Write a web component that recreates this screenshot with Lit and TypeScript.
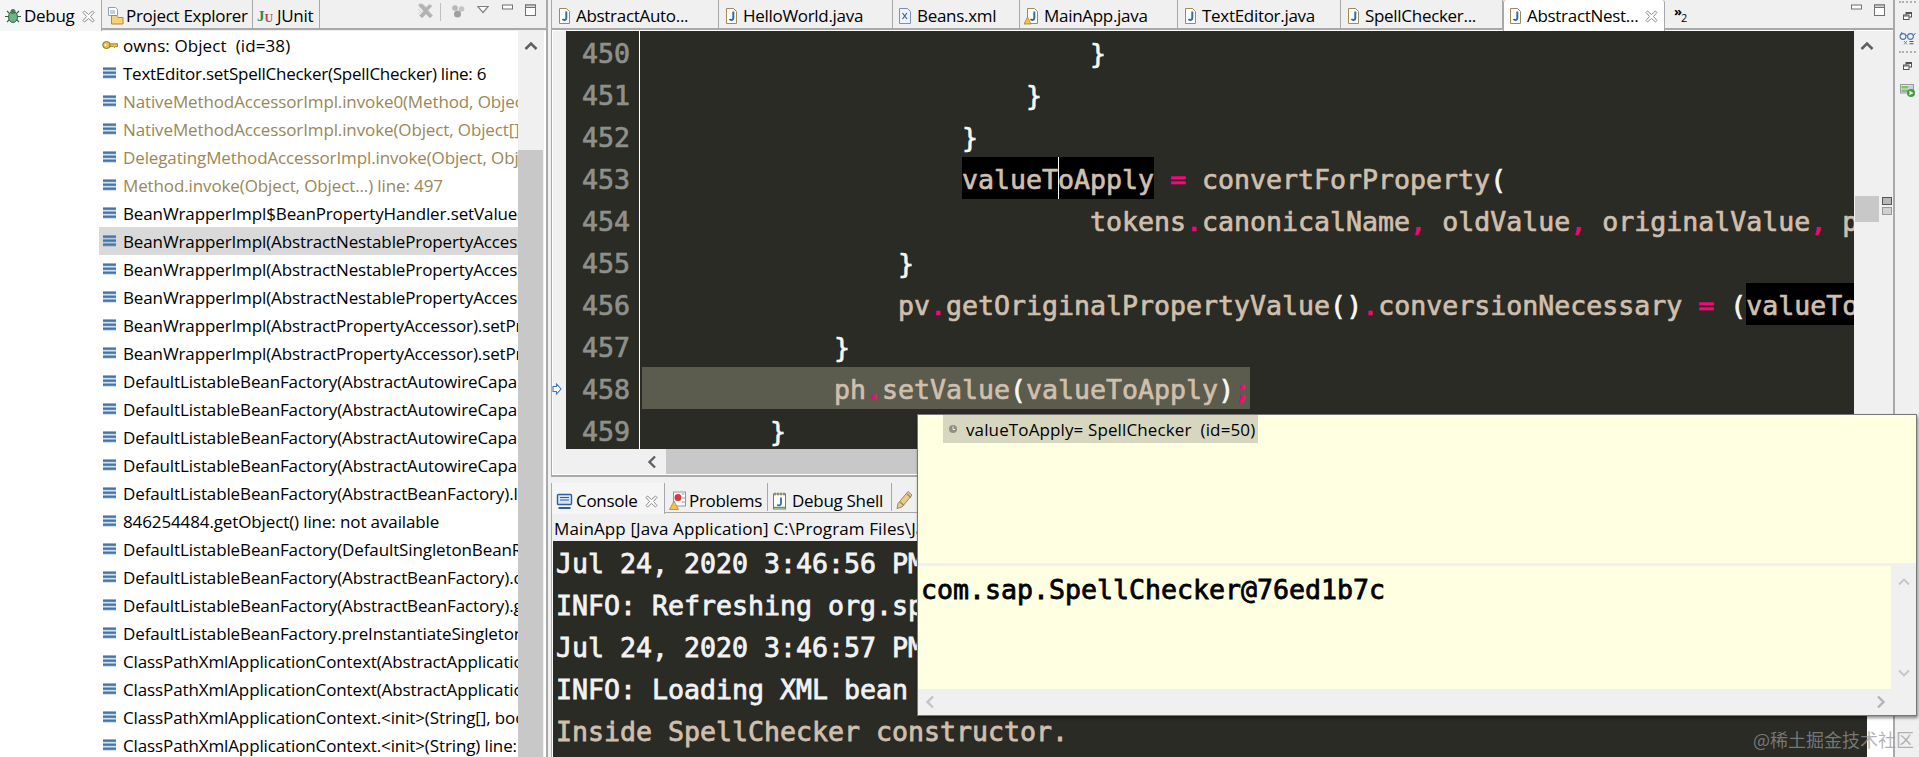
import { LitElement, html, css, svg } from "lit";
import { customElement } from "lit/decorators.js";

const frames: [string, string?][] = [
  ["owns: Object  (id=38)", "key"],
  ["TextEditor.setSpellChecker(SpellChecker) line: 6", "tight"],
  ["NativeMethodAccessorImpl.invoke0(Method, Object, Object[]) line: not available [native method]", "lib"],
  ["NativeMethodAccessorImpl.invoke(Object, Object[]) line: 62", "lib"],
  ["DelegatingMethodAccessorImpl.invoke(Object, Object[]) line: 43", "lib"],
  ["Method.invoke(Object, Object...) line: 497", "lib"],
  ["BeanWrapperImpl$BeanPropertyHandler.setValue(Object, Object) line: 358"],
  ["BeanWrapperImpl(AbstractNestablePropertyAccessor).processLocalProperty(", "sel"],
  ["BeanWrapperImpl(AbstractNestablePropertyAccessor).setPropertyValue("],
  ["BeanWrapperImpl(AbstractNestablePropertyAccessor).setPropertyValue("],
  ["BeanWrapperImpl(AbstractPropertyAccessor).setPropertyValues("],
  ["BeanWrapperImpl(AbstractPropertyAccessor).setPropertyValues("],
  ["DefaultListableBeanFactory(AbstractAutowireCapableBeanFactory).applyPropertyValues("],
  ["DefaultListableBeanFactory(AbstractAutowireCapableBeanFactory).populateBean("],
  ["DefaultListableBeanFactory(AbstractAutowireCapableBeanFactory).doCreateBean("],
  ["DefaultListableBeanFactory(AbstractAutowireCapableBeanFactory).createBean("],
  ["DefaultListableBeanFactory(AbstractBeanFactory).lambda$doGetBean$0("],
  ["846254484.getObject() line: not available"],
  ["DefaultListableBeanFactory(DefaultSingletonBeanRegistry).getSingleton("],
  ["DefaultListableBeanFactory(AbstractBeanFactory).doGetBean("],
  ["DefaultListableBeanFactory(AbstractBeanFactory).getBean("],
  ["DefaultListableBeanFactory.preInstantiateSingletons() line: 760"],
  ["ClassPathXmlApplicationContext(AbstractApplicationContext).finishBeanFactoryInitialization("],
  ["ClassPathXmlApplicationContext(AbstractApplicationContext).refresh() line: 522"],
  ["ClassPathXmlApplicationContext.<init>(String[], boolean, ApplicationContext) line: 144"],
  ["ClassPathXmlApplicationContext.<init>(String) line: 85"],
];

const code: [number, number, string, string?][] = [
  [450, 28, "}"],
  [451, 24, "}"],
  [452, 20, "}"],
  [453, 20, "valueToApply = convertForProperty(", "caret"],
  [454, 28, "tokens.canonicalName, oldValue, originalValue, pd.getTypeDescriptor()"],
  [455, 16, "}"],
  [456, 16, "pv.getOriginalPropertyValue().conversionNecessary = (valueToApply != originalValue);", "occ"],
  [457, 12, "}"],
  [458, 12, "ph.setValue(valueToApply);", "hl"],
  [459, 8, "}"],
];

function tok(src: string) {
  return src.split(/([.,=;!]|[(){}])/).map((p) => {
    if (!p) return "";
    if (/^[.,=;!]$/.test(p)) return html`<span class="op">${p}</span>`;
    if (/^[(){}]$/.test(p)) return html`<span class="br">${p}</span>`;
    return p;
  });
}

function line(text: string, mode?: string) {
  if (mode === "hl") return html`<span class="hlline">${" ".repeat(12)}${tok(text)}</span>`;
  if (mode === "caret") {
    const rest = text.slice(12);
    return html`<span class="occur">valueT<span class="caret"></span>oApply</span>${tok(rest)}`;
  }
  if (mode === "occ") {
    const i = text.indexOf("valueToApply");
    return html`${tok(text.slice(0, i))}<span class="occur">valueToApply</span>${tok(text.slice(i + 12))}`;
  }
  return tok(text);
}

const ic = (w: number, h: number, body: unknown) =>
  html`<svg class="ic" width=${w} height=${h} viewBox="0 0 ${w} ${h}">${body}</svg>`;

const javaPage = (warn = false) =>
  ic(16, 18, svg`
    <path d="M3.500 1.500h7l3 3v12h-10z" fill="#fff" stroke="#a08a55"/>
    <path d="M10.300 4.500v6.500c0 2.300-2.700 2.600-3.800 1" fill="none" stroke="#2f6cab" stroke-width="2"/>
    ${warn ? svg`<path d="M3.500 10l3.600 7H0z" fill="#f2c14e" stroke="#a87a1e" stroke-width=".7"/>` : ""}`);

const xmlPage = () =>
  ic(16, 18, svg`
    <path d="M2.500 1.500h8l3 3v12h-11z" fill="#eef3fa" stroke="#7c90b4"/>
    <path d="M5.500 6l4.500 6M10 6l-4.500 6" stroke="#44628f" stroke-width="1.200"/>`);

const closeX = () =>
  ic(13, 13, svg`<path d="M2.500 1L6.500 4.500 10.500 1 12 2.500 8.500 6.500 12 10.500 10.500 12 6.500 8.500 2.500 12 1 10.500 4.500 6.500 1 2.500z" fill="#fff" stroke="#8c8c8c"/>`);

const bug = () =>
  ic(18, 18, svg`
    <path d="M3 4l3 3M15 4l-3 3M1 9.500h4M13 9.500h4M3 15l3-3M15 15l-3-3" stroke="#3c5a44" stroke-width="1.100"/>
    <ellipse cx="9" cy="10" rx="4.500" ry="5.500" fill="#6fb286" stroke="#2f6d4c"/>
    <circle cx="9" cy="4.500" r="2.500" fill="#3f7d5b"/>`);

const folder = () =>
  ic(18, 20, svg`
    <path d="M2.500 1.500h7l2 2v6h-9z" fill="#fff" stroke="#8aa0b8"/>
    <path d="M4 5h5M4 7h5" stroke="#8aa0b8"/>
    <path d="M5.500 9.500h5l1.500 2h5v6.500h-11.500z" fill="#f4d27a" stroke="#b5893a"/>`);

const stack = () =>
  ic(13, 12, svg`
    <defs><linearGradient id="sb" x1="0" y1="0" x2="0" y2="1"><stop offset="0" stop-color="#2a5f9c"/><stop offset="1" stop-color="#6d9cc8"/></linearGradient></defs>
    <rect x="0" y="0.500" width="13" height="2.800" fill="url(#sb)"/>
    <rect x="0" y="4.500" width="13" height="2.800" fill="url(#sb)"/>
    <rect x="0" y="8.500" width="13" height="2.800" fill="url(#sb)"/>`);

const key = () =>
  ic(16, 10, svg`
    <ellipse cx="4.500" cy="5" rx="3.800" ry="3.500" fill="#e9c04a" stroke="#8f7320"/>
    <path d="M8 3.800h7.500v2.800H13.500l-1 1-1-1H8z" fill="#e9c04a" stroke="#8f7320" stroke-width=".8"/>
    <circle cx="3.500" cy="5" r="1.100" fill="#fff"/>`);

const removeAll = () =>
  ic(17, 16, svg`
    <path d="M2 1l3.500 0 3.500 3.500L12.500 1.500 15 3 11 7.500 15.500 12.500 13 15 9 11 5 15 2.500 12.500 6.500 8 2 3z" fill="#b2b2b2" stroke="#c6c6c6"/>
    <path d="M1 6l3 3M1 11l3-3" stroke="#d0d0d0"/>`);

const balls = () =>
  ic(14, 15, svg`
    <circle cx="4" cy="5" r="2.800" fill="#b8b8b8"/><circle cx="10.500" cy="6" r="2.800" fill="#c4c4c4"/>
    <circle cx="6.500" cy="11" r="3.500" fill="#a0a0a0"/>`);

const tri = () => ic(12, 12, svg`<path d="M.8 3.500h10.400L6 9.500z" fill="#fff" stroke="#808080" stroke-width="1.200"/>`);
const minimize = () => ic(11, 7, svg`<rect x=".5" y="2" width="10" height="4" fill="#fff" stroke="#707070"/>`);
const maximize = () => ic(11, 13, svg`<rect x=".5" y="2" width="10" height="10.500" fill="#fff" stroke="#707070"/><rect x=".5" y="2" width="10" height="2.500" fill="#d8d8d8" stroke="#707070"/>`);
const chevUp = (c = "#606060") => ic(14, 10, svg`<path d="M1.500 8L7 2.500 12.500 8" fill="none" stroke=${c} stroke-width="2.600"/>`);
const chevLeft = (c = "#606060") => ic(10, 14, svg`<path d="M8 1.500L2.500 7 8 12.500" fill="none" stroke=${c} stroke-width="2.400"/>`);
const chevRight = (c = "#b4b4b4") => ic(10, 14, svg`<path d="M2 1.500L7.500 7 2 12.500" fill="none" stroke=${c} stroke-width="2.400"/>`);
const chevDown = (c = "#c4c4c4") => ic(12, 8, svg`<path d="M1 1.500L6 6.500 11 1.500" fill="none" stroke=${c} stroke-width="1.800"/>`);
const restore = () =>
  ic(9, 8, svg`<rect x="3" y=".5" width="5.500" height="4.500" fill="#fff" stroke="#555"/><rect x=".5" y="3" width="5.500" height="4.500" fill="#fff" stroke="#555"/><path d="M.5 4h5M3 1.500h5" stroke="#555"/>`);
const glasses = () =>
  ic(17, 14, svg`<circle cx="4" cy="5.500" r="2.900" fill="none" stroke="#4a76a8" stroke-width="1.100"/><circle cx="11.500" cy="5.500" r="2.900" fill="none" stroke="#4a76a8" stroke-width="1.100"/><path d="M6.800 5q1-1 2 0M1.200 5L3 1M14.200 5L16.500 2" fill="none" stroke="#4a76a8"/><path d="M10.500 10.500h4M10.500 12.800h4" stroke="#2f5c96" stroke-width="1.100"/><path d="M5 10l3 3.500M8 10l-3 3.500" stroke="#4a76a8" stroke-width=".8"/>`);
const runView = () =>
  ic(15, 13, svg`<rect x=".5" y=".5" width="13" height="8.500" fill="#e6e6e6" stroke="#999"/><rect x="1.500" y="2" width="7" height="2.500" fill="#7fbf6e"/><rect x="1.500" y="5.500" width="7" height="2.500" fill="#7fbf6e"/><rect x="9" y="1.500" width="4" height="4" fill="#bcd4ea"/><circle cx="11" cy="9" r="4" fill="#3f9e3c"/><path d="M9.500 6.700l4 2.300-4 2.300z" fill="#fff"/>`);
const console_ = () =>
  ic(17, 17, svg`<rect x="1.500" y="1.500" width="14" height="10" rx="1" fill="#d7e6f6" stroke="#2f5f9a" stroke-width="1.400"/><path d="M4 4.500h9M4 7h9" stroke="#2f5f9a"/><path d="M2.500 15h12" stroke="#2f5f9a" stroke-width="2"/>`);
const problems = () =>
  ic(18, 20, svg`<rect x="4.500" y="1" width="12" height="14" fill="#fff" stroke="#8b97a8"/><circle cx="9" cy="6.500" r="3.500" fill="#d83a3a"/><path d="M12.500 3h3M13 7h3M13 11h3" stroke="#8b97a8"/><path d="M5 10l4.500 8.500H.5z" fill="#f2c14e" stroke="#a87a1e" stroke-width=".7"/>`);
const shell = () =>
  ic(15, 18, svg`<rect x="1.500" y="2" width="12" height="15" fill="#fff" stroke="#7a7a5a"/><path d="M3 .5v3M6 .5v3M9 .5v3M12 .5v3" stroke="#66665a"/><path d="M9 5.500v6c0 2.200-2.600 2.500-3.700 1" fill="none" stroke="#2f6cab" stroke-width="1.800"/><path d="M2 15.500h11" stroke="#52a447" stroke-width="1.500"/>`);
const pencil = () =>
  ic(17, 19, svg`<path d="M12 1.500l4 3.500L6 17l-5 1.500 1-5z" fill="#e9cc88" stroke="#a68a4a"/><path d="M4 12l4 3.500M11 4l4 3.500" stroke="#8c8c80" stroke-width="1.400"/>`);
const marker = () =>
  ic(10, 12, svg`<path d="M1 3.500h3.500V1L9 6l-4.500 5V8.500H1z" fill="#fff" stroke="#3d78b8" stroke-width="1.100"/>`);
const field = () =>
  ic(10, 12, svg`<circle cx="5" cy="6" r="4" fill="#8f8f86"/><path d="M5 3.500v3h2" stroke="#eee" fill="none"/>`);

@customElement("app-root")
export class AppRoot extends LitElement {
  static styles = css`
    :host { display: block; width: 1919px; height: 757px; }
    * { box-sizing: border-box; }
    .root {
      position: relative; display: flex; width: 1919px; height: 757px; overflow: hidden;
      background: #f0f0f0; color: #000;
      font: 17px/28px "Open Sans", "Noto Sans", sans-serif; letter-spacing: -0.12px;
    }
    .ic { display: block; flex: none; }

    /* left debug view */
    .debug { flex: none; width: 548px; display: flex; flex-direction: column; border-right: 2px solid #a9a9a9; }
    .tabs { height: 31px; flex: none; border-bottom: 3px solid #f0f0f0; display: grid; align-items: stretch; position: relative; }
    .tabs::after { content: ""; position: absolute; left: 0; right: 0; top: 28px; height: 1.500px; background: #a8a8a8; }
    .dtabs { grid-template-columns: 102px 151px 67px 1fr; }
    .etabs { grid-template-columns: 167px 174px 127px 158px 163px 162px 162px 30px 1fr; }
    .ctabs { grid-template-columns: 113px 103px 124px 30px 1fr; height: 29px; border-bottom: 0; }
    .ctabs::after { display: none; }
    .tab {
      height: 28px; display: grid; grid-template-columns: 20px auto 1fr; align-items: center; padding: 2px 0 0 4px;
      border-right: 1px solid #a8a8a8; white-space: nowrap; overflow: hidden; letter-spacing: -0.3px;
    }
    .ctabs .tab { padding-top: 4px; }
    .tab .x { justify-self: end; margin-right: 6px; }
    .tab.active { background: #f5f5f5; position: relative; z-index: 1; height: 31px; padding-bottom: 3px; border-right: 1px solid #a8a8a8; }
    .tab.white { background: #fff; border-left: 1px solid #a8a8a8; border-radius: 3px 3px 0 0; padding-left: 3px; }
    .ju { font: bold 14px/1 "Liberation Serif", serif; letter-spacing: 0; display: flex; }
    .ju b { color: #2d8a4e; font-size: 15px; }
    .ju i { color: #c9404a; font-style: normal; font-size: 12px; align-self: flex-end; }
    .tools { display: flex; justify-content: flex-end; align-items: flex-start; gap: 12.500px; padding: 3px 10px 0 0; }
    .etabs .tools { padding-right: 8px; }
    .sep { width: 1px; height: 18px; background: #c0c0c0; margin: 0 -2.500px 0 -7px; }
    .treewrap { flex: 1; display: flex; min-height: 0; background: #fff; }
    .tree { flex: none; width: 518px; padding-left: 99px; overflow: hidden; }
    .row { height: 28px; display: flex; align-items: center; gap: 7px; padding-left: 4px; white-space: pre; overflow: hidden; }
    .row span { position: relative; top: 1px; }
    .row .ic { flex: none; }
    .row.key { gap: 5px; padding-left: 3px; letter-spacing: 0.1px; }
    .row.tight { letter-spacing: -0.25px; }
    .row.lib { color: #9a8756; }
    .row.sel { background: #d9d9d9; }
    .vbar { flex: none; width: 26px; display: flex; flex-direction: column; background: #f0f0f0; }
    .vbar .up { height: 119px; display: flex; justify-content: center; padding-top: 10px; flex: none; }
    .vbar .thumb { flex: 1; background: #c8c8c8; margin-right: 1px; }

    .split { flex: none; width: 3px; }

    /* middle */
    .center { flex: none; width: 1344px; display: flex; flex-direction: column; border-right: 2px solid #a9a9a9; }
    .editorpane { flex: none; height: 477px; display: flex; flex-direction: column; border-left: 1px solid #a9a9a9; border-bottom: 2px solid #a9a9a9; background: #fff; }
    .editorpane .tabs { background: #f0f0f0; border-bottom-color: #fff; }
    .more { font: bold 13px/1 "Open Sans", sans-serif; padding: 5px 0 0 9px; letter-spacing: 0; white-space: nowrap; }
    .more small { font: 11px/1 "Open Sans", sans-serif; position: relative; top: 6px; left: -1px; }
    .ebody { flex: none; height: 418px; display: flex; }
    .ruler { flex: none; width: 14px; background: #f0f0f0; border-left: 1px solid #fff; }
    .editor { flex: 1; min-width: 0; background: #2a2b25; overflow: hidden; font: 26.580px/46px "DejaVu Sans Mono", monospace; -webkit-text-stroke: .7px; letter-spacing: 0; color: #cfbfad; position: relative; }
    .cl { display: flex; height: 42px; white-space: pre; }
    .ln { flex: none; width: 74px; padding-right: 9px; text-align: right; color: #8f908a; border-right: 1px solid #fff; position: relative; }
    .src { padding-left: 2px; }
    .op { color: #ff007f; }
    .br { color: #f8f8f2; }
    .occur { display: inline-block; height: 42px; background: #000; position: relative; vertical-align: top; }
    .caret { position: absolute; top: 0; left: 96px; width: 1px; height: 42px; background: #fff; }
    .hlline { display: inline-block; height: 42px; background: #5b5b4e; vertical-align: top; }
    .vscroll { flex: none; width: 26px; background: #f0f0f0; display: flex; flex-direction: column; align-items: center; padding-top: 10px; }
    .vthumb { align-self: stretch; height: 26px; margin: 145px 1px 0 1px; background: #c8c8c8; }
    .overview { flex: none; width: 13px; background: #f0f0f0; padding: 166px 1px 0 2px; display: flex; flex-direction: column; gap: 2px; }
    .overview i { display: block; height: 8px; background: #b8b8b8; border: 1px solid #555; }
    .overview i + i { background: #d0d0d0; border-color: #999; }
    .hscroll { flex: none; height: 25px; display: flex; align-items: center; background: #f0f0f0; margin-left: 1px; }
    .hscroll .l { width: 113px; display: flex; justify-content: flex-end; padding-right: 9px; flex: none; }
    .hscroll .t { flex: 1; height: 25px; background: #c8c8c8; }

    .gap { flex: none; height: 6px; }
    .consolepane { flex: 1; min-height: 0; display: flex; flex-direction: column; border-left: 1px solid #a9a9a9; }
    .status { flex: none; height: 29px; line-height: 31px; padding-left: 2px; white-space: nowrap; letter-spacing: 0.12px; background: #f0f0f0; border-top: 1.500px solid #a8a8a8; }
    .cbody { flex: 1; min-height: 0; display: flex; background: #fff; padding-left: 1px; }
    .console { flex: none; width: 1314px; background: #2a2b25; overflow: hidden; font: 26.580px/42px "DejaVu Sans Mono", monospace; -webkit-text-stroke: .8px; letter-spacing: 0; color: #f2f2f2; padding: 1.500px 0 0 3px; white-space: pre; }
    .console .out { color: #cfbfad; }

    /* right strip */
    .strip { flex: 1; display: flex; flex-direction: column; align-items: center; }
    .dots { width: 17px; height: 2px; flex: none; border-top: 2px dotted #b0b0b0; margin-top: 1px; }
    .d2 { margin-top: 6px; }
    .strip .r1 { margin-top: 9px; }
    .strip .g1 { margin-top: 11px; }
    .strip .r2 { margin-top: 9px; }
    .strip .v1 { margin-top: 14px; }

    /* hover popup */
    .popup {
      position: absolute; left: 917px; top: 414px; width: 1000px; height: 302px; display: flex; flex-direction: column;
      background: #ffffe1; border: 1px solid #777; box-shadow: 1px 2px 3px rgba(0, 0, 0, .45);
    }
    .ptree { flex: none; height: 148px; padding-left: 25px; }
    .prow { display: inline-flex; height: 28px; align-items: center; gap: 8px; padding: 0 3px 0 5px; background: #d7d7c0; white-space: pre; letter-spacing: 0.12px; }
    .prow span { position: relative; top: 1px; }
    .psplit { flex: none; height: 3px; background: #f0f0f0; }
    .pdetail { flex: 1; min-height: 0; display: flex; }
    .ptext { flex: 1; padding: 3px 0 0 3px; font: 26.580px/42px "DejaVu Sans Mono", monospace; -webkit-text-stroke: .8px; letter-spacing: 0; color: #000; white-space: pre; }
    .pv { flex: none; width: 25px; background: #f0f0f0; display: flex; flex-direction: column; align-items: center; justify-content: space-between; padding: 12px 0; }
    .pv .flip { transform: rotate(180deg); }
    .ph { flex: none; height: 26px; background: #f0f0f0; display: flex; align-items: center; justify-content: space-between; padding: 0 30px 0 7px; }

    .mark { position: absolute; left: 552px; top: 383px; }
    .wm {
      position: absolute; right: 5px; top: 726px; font: 18px/26px "Noto Sans CJK SC", sans-serif; letter-spacing: 0;
      color: rgba(150, 150, 150, .72); white-space: nowrap; pointer-events: none;
    }
  `;

  render() {
    return html`<div class="root">
      <section class="debug">
        <div class="tabs dtabs">
          <div class="tab active">${bug()}<span>Debug</span><span class="x">${closeX()}</span></div>
          <div class="tab">${folder()}<span>Project Explorer</span></div>
          <div class="tab"><span class="ju"><b>J</b><i>U</i></span><span>JUnit</span></div>
          <div class="tools">${removeAll()}<span class="sep"></span>${balls()}${tri()}${minimize()}${maximize()}</div>
        </div>
        <div class="treewrap">
          <div class="tree">
            ${frames.map(([t, m]) => html`<div class="row ${m ?? ""}">${m === "key" ? key() : stack()}<span>${t}</span></div>`)}
          </div>
          <div class="vbar"><div class="up">${chevUp()}</div><div class="thumb"></div></div>
        </div>
      </section>
      <div class="split"></div>
      <main class="center">
        <div class="editorpane">
          <div class="tabs etabs">
            <div class="tab">${javaPage()}<span>AbstractAuto...</span></div>
            <div class="tab">${javaPage()}<span>HelloWorld.java</span></div>
            <div class="tab">${xmlPage()}<span>Beans.xml</span></div>
            <div class="tab">${javaPage(true)}<span>MainApp.java</span></div>
            <div class="tab">${javaPage()}<span>TextEditor.java</span></div>
            <div class="tab">${javaPage()}<span>SpellChecker...</span></div>
            <div class="tab active white">${javaPage()}<span>AbstractNest...</span><span class="x">${closeX()}</span></div>
            <div class="more">»<small>2</small></div>
            <div class="tools">${minimize()}${maximize()}</div>
          </div>
          <div class="ebody">
            <div class="ruler"></div>
            <div class="editor">
              ${code.map(([n, ind, t, m]) => html`<div class="cl"><span class="ln">${n}</span><span class="src">${m === "hl" ? "" : " ".repeat(ind)}${line(t, m)}</span></div>`)}
            </div>
            <div class="vscroll">${chevUp()}<div class="vthumb"></div></div>
            <div class="overview"><i></i><i></i></div>
          </div>
          <div class="hscroll"><div class="l">${chevLeft()}</div><div class="t"></div></div>
        </div>
        <div class="gap"></div>
        <div class="consolepane">
          <div class="tabs ctabs">
            <div class="tab active">${console_()}<span>Console</span><span class="x">${closeX()}</span></div>
            <div class="tab">${problems()}<span>Problems</span></div>
            <div class="tab">${shell()}<span>Debug Shell</span></div>
            <div class="tab">${pencil()}</div>
          </div>
          <div class="status">MainApp [Java Application] C:\\Program Files\\Java\\jdk1.8.0_201\\bin\\javaw.exe</div>
          <div class="cbody">
            <div class="console">Jul 24, 2020 3:46:56 PM org.springframework.context.support
INFO: Refreshing org.springframework.context.support
Jul 24, 2020 3:46:57 PM org.springframework.beans.factory
INFO: Loading XML bean definitions from class path resource
<span class="out">Inside SpellChecker constructor.</span></div>
          </div>
        </div>
      </main>
      <aside class="strip">
        <span class="dots"></span>
        <span class="r1">${restore()}</span>
        <span class="g1">${glasses()}</span>
        <span class="dots d2"></span>
        <span class="r2">${restore()}</span>
        <span class="v1">${runView()}</span>
      </aside>
      <span class="mark">${marker()}</span>
      <div class="popup">
        <div class="ptree"><div class="prow">${field()}<span>valueToApply= SpellChecker  (id=50)</span></div></div>
        <div class="psplit"></div>
        <div class="pdetail">
          <div class="ptext">com.sap.SpellChecker@76ed1b7c</div>
          <div class="pv"><span class="flip">${chevDown()}</span>${chevDown()}</div>
        </div>
        <div class="ph">${chevLeft("#c4c4c4")}${chevRight()}</div>
      </div>
      <div class="wm">@稀土掘金技术社区</div>
    </div>`;
  }
}
